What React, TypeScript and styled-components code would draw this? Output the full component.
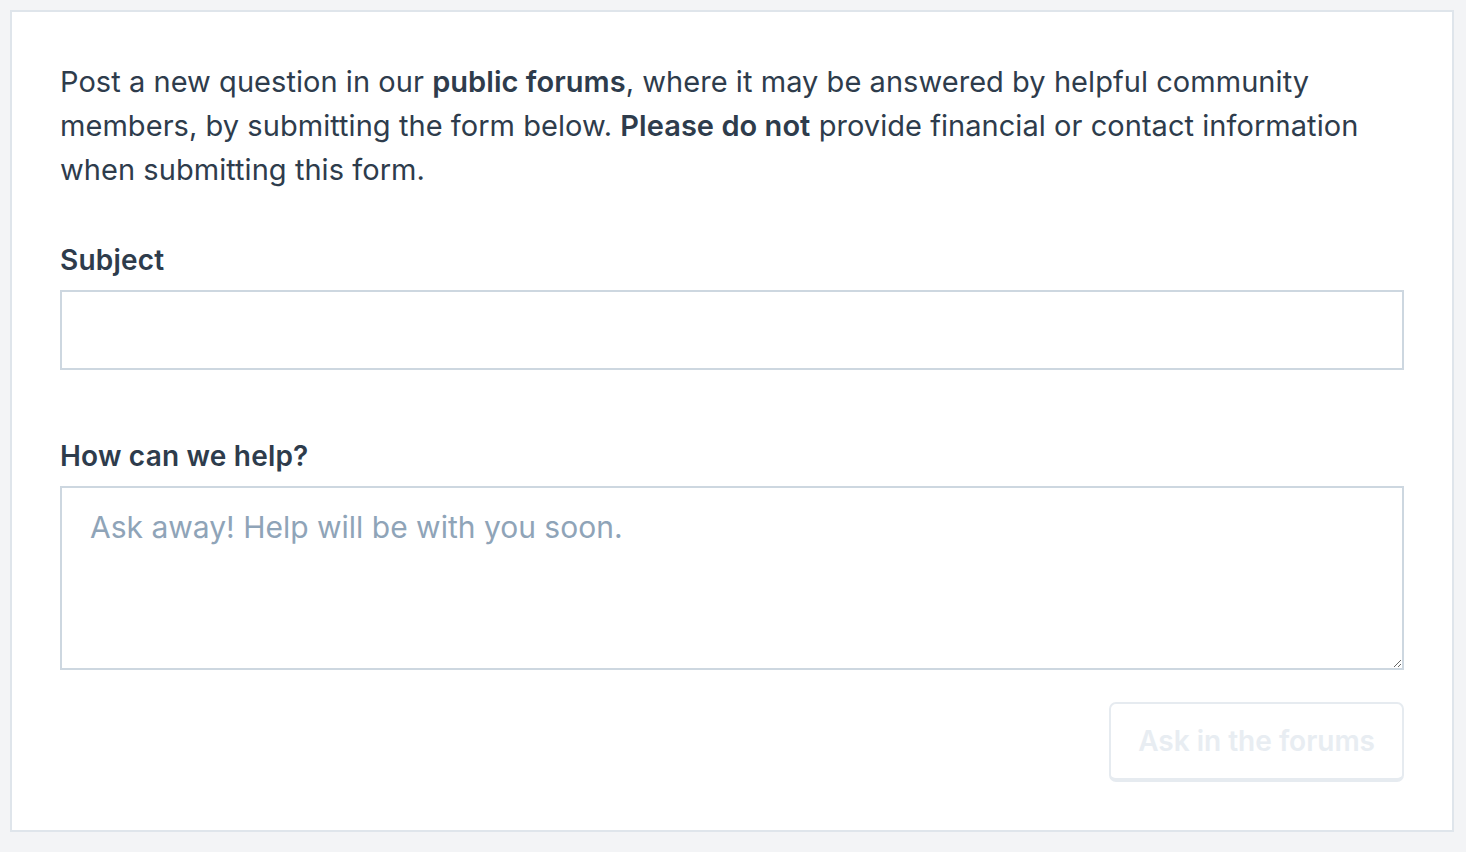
import styled, { createGlobalStyle } from "styled-components";

const GlobalStyle = createGlobalStyle`
  html, body {
    margin: 0;
    background: #f3f4f6;
  }
  body {
    padding: 10px 12px 20px 10px;
    font-family: Inter, "Noto Sans", "Liberation Sans", sans-serif;
    color: #2e3c4c;
  }
`;

const Card = styled.div`
  background: #ffffff;
  border: 2px solid #dfe5eb;
  padding: 48px;
`;

const Intro = styled.p`
  margin: 0 0 48px;
  font-size: 29px;
  line-height: 44px;
  letter-spacing: 0.05px;

  strong {
    font-weight: 600;
  }
`;

const Field = styled.div<{ $gap?: number }>`
  display: flex;
  flex-direction: column;
  margin-bottom: ${(p) => p.$gap ?? 0}px;
`;

const Label = styled.label`
  font-size: 28px;
  font-weight: 600;
  line-height: 40px;
  margin-bottom: 10px;
  letter-spacing: 0.2px;
`;

const Input = styled.input`
  box-sizing: border-box;
  height: 80px;
  border: 2px solid #cdd7e0;
  border-radius: 0;
  padding: 0 28px;
  font: inherit;
  font-size: 30px;
  outline: none;
`;

const TextArea = styled.textarea`
  box-sizing: border-box;
  height: 184px;
  border: 2px solid #cdd7e0;
  border-radius: 0;
  padding: 17px 28px;
  font: inherit;
  font-size: 30px;
  line-height: 44px;
  color: #2e3c4c;
  outline: none;

  &::placeholder {
    color: #8fa4b8;
  }
`;

const Actions = styled.div`
  display: flex;
  justify-content: flex-end;
  margin-top: 32px;
`;

const Button = styled.button`
  box-sizing: border-box;
  height: 80px;
  padding: 0 27px;
  background: #ffffff;
  border: 2px solid #e6ebf0;
  border-bottom-width: 4px;
  border-radius: 7px;
  font: inherit;
  font-size: 28px;
  font-weight: 600;
  color: #e8edf2;
`;

export default function App() {
  return (
    <>
      <GlobalStyle />
      <Card>
        <Intro>
          Post a new question in our <strong>public forums</strong>, where it may be
          answered by helpful community members, by submitting the form below.{" "}
          <strong>Please do not</strong> provide financial or contact information
          when submitting this form.
        </Intro>
        <Field $gap={66}>
          <Label htmlFor="subject">Subject</Label>
          <Input id="subject" type="text" />
        </Field>
        <Field>
          <Label htmlFor="help">How can we help?</Label>
          <TextArea id="help" placeholder="Ask away! Help will be with you soon." />
        </Field>
        <Actions>
          <Button type="submit" disabled>
            Ask in the forums
          </Button>
        </Actions>
      </Card>
    </>
  );
}
